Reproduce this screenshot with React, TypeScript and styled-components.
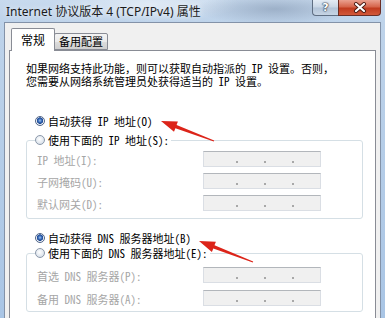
import React from 'react';
import styled, { createGlobalStyle } from 'styled-components';

const GlobalStyle = createGlobalStyle`
  html, body { margin: 0; padding: 0; }
  body { width: 385px; height: 318px; overflow: hidden; background: #fff; }
`;

const dialogFont = `"Noto Sans Mono CJK SC", "Liberation Mono", "Noto Sans CJK SC", monospace`;

const Window = styled.div`
  position: relative;
  width: 385px;
  height: 318px;
  overflow: hidden;
  display: flex;
  flex-direction: column;
  box-sizing: border-box;
  background:
    radial-gradient(ellipse 80px 16px at 275px 9px, rgba(118, 138, 165, 0.5), rgba(118, 138, 165, 0) 100%),
    radial-gradient(ellipse 90px 18px at 150px 4px, rgba(255, 255, 255, 0.45), rgba(255, 255, 255, 0) 100%),
    linear-gradient(180deg, #c8daee 0%, #bed3ea 22px, #a9c5e5 100%);
`;

const TitleBar = styled.div`
  height: 22px;
  display: flex;
  align-items: flex-start;
  padding-left: 6px;
  flex-shrink: 0;
`;

const TitleText = styled.div`
  font-family: "Noto Sans", "Noto Sans CJK SC", sans-serif;
  font-size: 12px;
  line-height: 23px;
  color: #1b1b1b;
  white-space: nowrap;
  text-shadow: 0 0 6px rgba(255, 255, 255, 0.9);
`;

const CaptionButtons = styled.div`
  margin-left: auto;
  margin-right: 4px;
  display: flex;
  height: 16px;
`;

const HelpButton = styled.div`
  width: 26px;
  height: 16px;
  box-sizing: border-box;
  border: 1px solid #5f6e82;
  border-top: none;
  border-right: none;
  border-radius: 0 0 0 4px;
  background: linear-gradient(180deg, #e4ecf5 0%, #c9d6e5 48%, #b3c4d8 52%, #c6d4e4 100%);
  display: flex;
  align-items: center;
  justify-content: center;
  font-family: "DejaVu Sans", sans-serif;
  font-weight: bold;
  font-size: 11px;
  color: #fff;
  text-shadow: 0 0 1px #2a3446, 0 0 1px #2a3446, 0 0 2px #2a3446;
`;

const CloseButton = styled.div`
  width: 43px;
  height: 16px;
  box-sizing: border-box;
  border: 1px solid #6a2e26;
  border-top: none;
  border-radius: 0 0 4px 0;
  background: linear-gradient(180deg, #eaa08f 0%, #d6654c 45%, #c13b1f 55%, #d2583a 100%);
  display: flex;
  align-items: center;
  justify-content: center;
`;

const Client = styled.div`
  flex: 1;
  min-height: 0;
  margin: 0 4px;
  border: 1px solid #8392a8;
  border-bottom: none;
  background: #f0f0f0;
  padding: 5px 4px 0;
  display: flex;
  flex-direction: column;
`;

const TabStrip = styled.div`
  height: 23px;
  margin-bottom: -1px;
  padding-left: 2px;
  display: flex;
  align-items: flex-end;
  position: relative;
  z-index: 1;
  flex-shrink: 0;
`;

const Tab = styled.div<{ $active?: boolean }>`
  box-sizing: border-box;
  height: ${(p) => (p.$active ? 23 : 17)}px;
  margin-bottom: ${(p) => (p.$active ? 0 : 1)}px;
  margin-left: ${(p) => (p.$active ? 0 : -1)}px;
  padding: 0 ${(p) => (p.$active ? 9 : 4)}px;
  border: 1px solid #898c95;
  border-bottom: ${(p) => (p.$active ? 'none' : '1px solid #898c95')};
  border-radius: 2px 2px 0 0;
  background: ${(p) => (p.$active ? '#fff' : 'linear-gradient(180deg, #f3f3f3 0%, #ebebeb 50%, #dddddd 51%, #cfcfcf 100%)')};
  position: relative;
  z-index: ${(p) => (p.$active ? 2 : 1)};
  font-family: ${dialogFont};
  font-size: ${(p) => (p.$active ? 12 : 11)}px;
  line-height: ${(p) => (p.$active ? 22 : 15)}px;
  color: #000;
  white-space: nowrap;
`;

const Panel = styled.div`
  flex: 1;
  min-height: 0;
  border: 1px solid #898c95;
  border-bottom: none;
  background: #fff;
  padding: 11px 12px 0 16px;
  display: flex;
  flex-direction: column;
`;

const Description = styled.div`
  font-family: ${dialogFont};
  font-size: 11px;
  line-height: 13px;
  color: #000;
  white-space: nowrap;
`;

const RadioRow = styled.div<{ $inset?: number; $gapTop?: number }>`
  display: flex;
  align-items: center;
  gap: 3px;
  height: 14px;
  padding-left: ${(p) => p.$inset ?? 0}px;
  margin-top: ${(p) => p.$gapTop ?? 0}px;
  font-family: ${dialogFont};
  font-size: 11px;
  line-height: 14px;
  color: #000;
  white-space: nowrap;
`;

const Radio = styled.span<{ $checked?: boolean }>`
  width: 10px;
  height: 10px;
  box-sizing: border-box;
  border-radius: 50%;
  flex-shrink: 0;
  border: 1px solid ${(p) => (p.$checked ? '#4f6488' : '#8b98aa')};
  background: ${(p) =>
    p.$checked
      ? 'radial-gradient(circle at 50% 45%, #9cc0ee 0, #2f62b2 2px, #1d4790 3px, #f3f6fa 3.5px, #d6dde6 100%)'
      : 'radial-gradient(circle at 45% 40%, #ffffff 0, #e3e9f0 55%, #c9d3de 100%)'};
`;

const Group = styled.fieldset<{ $padTop: number; $padBottom: number; $gapTop: number }>`
  margin: ${(p) => p.$gapTop}px 0 0;
  padding: ${(p) => p.$padTop}px 0 ${(p) => p.$padBottom}px 10px;
  border: 1px solid #d5dfe5;
  border-radius: 3px;
  min-width: 0;
`;

const Legend = styled.legend`
  padding: 0 2px 0 0;
  margin-left: -2px;
`;

const Rows = styled.div<{ $gap: number }>`
  display: flex;
  flex-direction: column;
  gap: ${(p) => p.$gap}px;
`;

const FieldRow = styled.div`
  display: flex;
  align-items: center;
  height: 16px;
`;

const FieldLabel = styled.span`
  width: 166px;
  font-family: ${dialogFont};
  font-size: 11px;
  line-height: 14px;
  color: #a6a6a6;
  white-space: nowrap;
  padding-top: 2px;
`;

const Field = styled.div`
  width: 118px;
  height: 16px;
  box-sizing: border-box;
  border: 1px solid #dadee4;
  border-top-color: #b2b6bb;
  background: #f0f0f0;
  display: flex;
  align-items: flex-end;
  padding: 0 0 3px 32px;
  gap: 26px;
`;

const Dot = styled.span`
  width: 2px;
  height: 2px;
  background: #a8a8a8;
`;

const Overlay = styled.svg`
  position: absolute;
  left: 0;
  top: 0;
  pointer-events: none;
`;

function arrowPoints(tx: number, ty: number, hx: number, hy: number) {
  const head = 16;
  const half = 5.5;
  const tail = 0.6;
  const neck = 1.7;
  const dx = hx - tx;
  const dy = hy - ty;
  const len = Math.hypot(dx, dy);
  const ux = dx / len;
  const uy = dy / len;
  const px = -uy;
  const py = ux;
  const bx = hx - ux * head;
  const by = hy - uy * head;
  const pts = [
    [tx + px * tail, ty + py * tail],
    [bx + px * neck, by + py * neck],
    [bx + px * half, by + py * half],
    [hx, hy],
    [bx - px * half, by - py * half],
    [bx - px * neck, by - py * neck],
    [tx - px * tail, ty - py * tail],
  ];
  return pts.map((p) => p.map((v) => v.toFixed(1)).join(',')).join(' ');
}

function IpField() {
  return (
    <Field>
      <Dot />
      <Dot />
      <Dot />
    </Field>
  );
}

export default function App() {
  return (
    <Window>
      <GlobalStyle />
      <TitleBar>
        <TitleText>Internet 协议版本 4 (TCP/IPv4) 属性</TitleText>
        <CaptionButtons>
          <HelpButton>?</HelpButton>
          <CloseButton>
            <svg width="14" height="11" viewBox="0 0 14 11">
              <path d="M3 2 L11 9 M11 2 L3 9" stroke="#4a1a12" strokeWidth="4" strokeLinecap="round" />
              <path d="M3 2 L11 9 M11 2 L3 9" stroke="#fff" strokeWidth="2.2" strokeLinecap="round" />
            </svg>
          </CloseButton>
        </CaptionButtons>
      </TitleBar>
      <Client>
        <TabStrip>
          <Tab $active>常规</Tab>
          <Tab>备用配置</Tab>
        </TabStrip>
        <Panel>
          <Description>
            如果网络支持此功能，则可以获取自动指派的 IP 设置。否则，
            <br />
            您需要从网络系统管理员处获得适当的 IP 设置。
          </Description>
          <RadioRow $inset={9} $gapTop={26}>
            <Radio $checked />
            自动获得 IP 地址(O)
          </RadioRow>
          <Group $gapTop={5} $padTop={4} $padBottom={7}>
            <Legend>
              <RadioRow>
                <Radio />
                使用下面的 IP 地址(S):
              </RadioRow>
            </Legend>
            <Rows $gap={6}>
              <FieldRow>
                <FieldLabel>IP 地址(I):</FieldLabel>
                <IpField />
              </FieldRow>
              <FieldRow>
                <FieldLabel>子网掩码(U):</FieldLabel>
                <IpField />
              </FieldRow>
              <FieldRow>
                <FieldLabel>默认网关(D):</FieldLabel>
                <IpField />
              </FieldRow>
            </Rows>
          </Group>
          <RadioRow $inset={9} $gapTop={12}>
            <Radio $checked />
            自动获得 DNS 服务器地址(B)
          </RadioRow>
          <Group $gapTop={1} $padTop={7} $padBottom={5}>
            <Legend>
              <RadioRow>
                <Radio />
                使用下面的 DNS 服务器地址(E):
              </RadioRow>
            </Legend>
            <Rows $gap={7}>
              <FieldRow>
                <FieldLabel>首选 DNS 服务器(P):</FieldLabel>
                <IpField />
              </FieldRow>
              <FieldRow>
                <FieldLabel>备用 DNS 服务器(A):</FieldLabel>
                <IpField />
              </FieldRow>
            </Rows>
          </Group>
        </Panel>
      </Client>
      <Overlay width="385" height="318" viewBox="0 0 385 318">
        <polygon points={arrowPoints(214, 141, 161, 121)} fill="#dc2419" />
        <polygon points={arrowPoints(253, 262, 199, 241)} fill="#dc2419" />
      </Overlay>
    </Window>
  );
}
